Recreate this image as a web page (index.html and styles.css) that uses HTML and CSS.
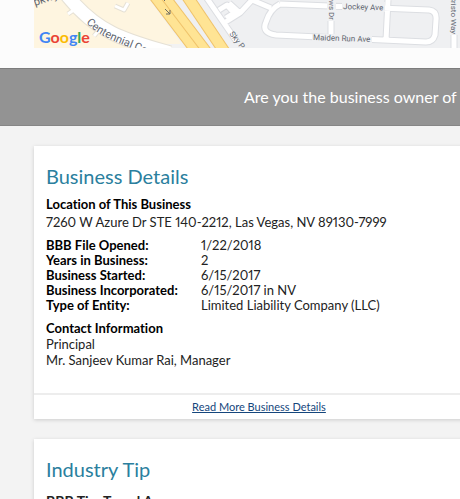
FILE: index.html
```html
<!DOCTYPE html>
<html lang="en">
<head>
<meta charset="utf-8">
<meta name="viewport" content="width=device-width, initial-scale=1">
<title>Business Profile</title>
<link rel="stylesheet" href="styles.css">
</head>
<body>
<header class="map-strip">
  <svg class="map" viewBox="34 0 426 48" preserveAspectRatio="xMinYMax slice" role="img" aria-label="Map of the business location">
    <defs>
      <path id="centennial" d="M86 23C100 37 114 41 156 58"/>
    </defs>
    <rect x="34" width="426" height="48" fill="#eff0f2"/>
    <path d="M34 0H150L185 48H34Z" fill="#fef5e0"/>
    <path d="M186 27L203 48H180L183 44L184 27Z" fill="#f7f8fa"/>
    <path d="M185 25L205 48H163V44H180Z" fill="#f2f2f2"/>
    <!-- Centennial Center Blvd and its side roads -->
    <g fill="none" stroke-linejoin="round">
      <path d="M66 -6C80 12 94 24 112 33S146 46 170 53" stroke="#e6e1d5" stroke-width="15"/>
      <path d="M75 9L68 14M99 30L94 36M115 6L124 10L128 3" stroke="#e6e1d5" stroke-width="5"/>
      <path d="M66 -6C80 12 94 24 112 33S146 46 170 53" stroke="#fff" stroke-width="13"/>
      <path d="M78 7L68 14M101 28L94 36M115 6L124 10L128 3" stroke="#fff" stroke-width="3"/>
    </g>
    <!-- Freeway -->
    <g fill="none">
      <path d="M154 -4L198 54" stroke="#f0c36b" stroke-width="11"/>
      <path d="M154 -4L198 54" stroke="#ffe494" stroke-width="9"/>
      <path d="M165 -4L209 54" stroke="#f0c36b" stroke-width="10"/>
      <path d="M165 -4L209 54" stroke="#ffe494" stroke-width="8"/>
      <path d="M187 -4L226 54" stroke="#f0c36b" stroke-width="12"/>
      <path d="M187 -4L226 54" stroke="#ffe494" stroke-width="10"/>
      <path d="M165 9L170 14M170 10V14H166M162 -2L165 1" stroke="#6d6b62"/>
    </g>
    <!-- Neighbourhood streets -->
    <g fill="none" stroke="#dcdee2" stroke-width="7" stroke-linejoin="round">
      <path d="M206 -3L237 42M219 10L227 5L234 13L226 18M224 23L240 13L229 3M240 13L252 0L271 8M280 4L429 10Q437 11 436 20L435 35Q433 42 426 42L276 35Q261 33 266 22Q270 9 280 4M331 0V37M388 0L386 40M454 0V48"/>
    </g>
    <g fill="none" stroke="#fff" stroke-width="5" stroke-linejoin="round">
      <path d="M206 -3L237 42M219 10L227 5L234 13L226 18M224 23L240 13L229 3M240 13L252 0L271 8M280 4L429 10Q437 11 436 20L435 35Q433 42 426 42L276 35Q261 33 266 22Q270 9 280 4M331 0V37M388 0L386 40M454 0V48"/>
    </g>
    <g fill="#eff0f2">
      <path d="M342 2H385V12H342ZM312 34H372V43H312ZM327 0H336V21H327ZM449 0H459V35H449Z"/>
    </g>
    <g class="road-label">
      <text x="343" y="9" transform="rotate(2 343 9)">Jockey Ave</text>
      <text x="313" y="40" transform="rotate(2 313 40)">Maiden Run Ave</text>
      <text x="329" y="20" text-anchor="end" transform="rotate(90 329 20)">Meadows Dr</text>
      <text x="451" y="34" text-anchor="end" transform="rotate(90 451 34)">Cristo Way</text>
      <text x="229" y="34" transform="rotate(52 229 34)">Sky Pointe Dr</text>
    </g>
    <g class="road-label road-label-large">
      <text x="35" y="6" transform="rotate(-19 35 6)">pkwy</text>
      <text><textPath href="#centennial">Centennial Center</textPath></text>
    </g>
    <text class="map-logo" x="39" y="43"><tspan fill="#4285f4">G</tspan><tspan fill="#ea4335">o</tspan><tspan fill="#fbbc05">o</tspan><tspan fill="#4285f4">g</tspan><tspan fill="#34a853">l</tspan><tspan fill="#ea4335">e</tspan></text>
  </svg>
</header>

<div class="banner">
  <p class="banner-text">Are you the business owner of this page?</p>
</div>

<main class="content">
  <section class="card">
    <div class="card-body">
      <h2 class="card-title">Business Details</h2>
      <h3 class="label">Location of This Business</h3>
      <p class="address">7260 W Azure Dr STE 140-2212, Las Vegas, NV 89130-7999</p>
      <dl class="facts">
        <dt>BBB File Opened:</dt><dd>1/22/2018</dd>
        <dt>Years in Business:</dt><dd>2</dd>
        <dt>Business Started:</dt><dd>6/15/2017</dd>
        <dt>Business Incorporated:</dt><dd>6/15/2017 in NV</dd>
        <dt>Type of Entity:</dt><dd>Limited Liability Company (LLC)</dd>
      </dl>
      <h3 class="label">Contact Information</h3>
      <p>Principal</p>
      <p>Mr. Sanjeev Kumar Rai, Manager</p>
    </div>
    <div class="card-footer"><a href="#details">Read More Business Details</a></div>
  </section>

  <section class="card">
    <div class="card-body">
      <h2 class="card-title">Industry Tip</h2>
      <h3 class="tip-title">BBB Tip: Travel Agency</h3>
    </div>
  </section>
</main>
</body>
</html>
```
FILE: styles.css
```css
* { box-sizing: border-box; }

body {
  margin: 0;
  height: 100vh;
  overflow: hidden;
  background: #f3f3f3;
  color: #222;
  font-family: Lato, "Liberation Sans", sans-serif;
  font-size: 13px;
  font-variant-ligatures: none;
  font-variant-numeric: proportional-nums;
  line-height: 16px;
}

h2, h3, p, dl, dd { margin: 0; }

.map-strip {
  padding: 0 0 20px 34px;
  background: #fcfcfc;
}

.map {
  display: block;
  width: 100%;
  height: 48px;
}

.road-label {
  fill: #5f6670;
  font-family: Roboto, sans-serif;
  font-size: 8px;
}

.road-label-large { font-size: 11px; }

.map-logo {
  font-family: Lato, sans-serif;
  font-size: 16px;
  font-weight: 700;
}

.banner {
  padding: 17px 0 17px 244px;
  border-top: 1px solid #7d7d7d;
  border-bottom: 1px solid #868686;
  background: #939393;
  color: #fff;
  font-size: 16px;
  line-height: 22px;
  white-space: nowrap;
}

/* Cards run past the right edge of a narrow window. */
.content {
  display: grid;
  gap: 20px;
  margin: 20px -24px 0 34px;
}

.card {
  background: #fff;
  box-shadow: 0 1px 4px rgba(0, 0, 0, 0.16);
}

.card-body { padding: 15px 12px 25px; }

.card-title {
  margin-bottom: 5px;
  color: #2b7f9e;
  font-size: 20px;
  font-weight: 400;
  line-height: 30px;
}

.label {
  color: #000;
  font-size: 13px;
  font-weight: 700;
}

.address { margin-top: 2px; }

.facts {
  display: grid;
  grid-template-columns: 155px 1fr;
  margin: 8px 0 7px;
  line-height: 15px;
}

.facts dt {
  color: #000;
  font-weight: 700;
}

.card-footer {
  padding: 4px 0;
  border-top: 2px solid #ededed;
  font-size: 11px;
  text-align: center;
}

.card-footer a { color: #15467c; }

.tip-title {
  color: #222;
  font-size: 14px;
  line-height: 24px;
}
```
